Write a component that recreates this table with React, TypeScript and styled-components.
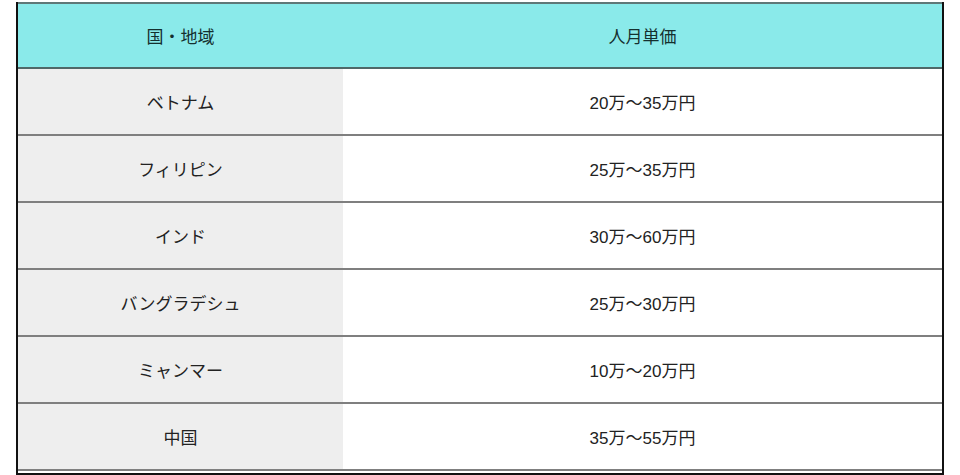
import styled, { createGlobalStyle } from 'styled-components';

const GlobalStyle = createGlobalStyle`
  html, body {
    margin: 0;
    padding: 0;
    background: #ffffff;
  }
  body {
    font-family: 'Liberation Sans', 'Noto Sans CJK JP', sans-serif;
    color: #222222;
  }
`;

interface PriceRow {
  region: string;
  price: string;
}

const rows: PriceRow[] = [
  { region: 'ベトナム', price: '20万～35万円' },
  { region: 'フィリピン', price: '25万～35万円' },
  { region: 'インド', price: '30万～60万円' },
  { region: 'バングラデシュ', price: '25万～30万円' },
  { region: 'ミャンマー', price: '10万～20万円' },
  { region: '中国', price: '35万～55万円' },
];

const App = () => {
  return (
    <>
      <GlobalStyle />
      <Page>
        <Table>
          <HeaderRow>
            <HeaderCell>国・地域</HeaderCell>
            <HeaderCell>人月単価</HeaderCell>
          </HeaderRow>
          {rows.map((row) => (
            <Row key={row.region}>
              <Cell $shaded>{row.region}</Cell>
              <Cell>{row.price}</Cell>
            </Row>
          ))}
        </Table>
      </Page>
    </>
  );
};

const Page = styled.div`
  padding: 2px 0 0 16px;
`;

const Table = styled.div`
  width: 928px;
  box-sizing: border-box;
  border-left: 2px solid #111111;
  border-right: 2px solid #111111;
  border-bottom: 2px solid #111111;
  padding-bottom: 2px;
  background: #ffffff;
`;

const Row = styled.div`
  display: grid;
  grid-template-columns: 325px 1fr;
  height: 67px;
  box-sizing: border-box;
  border-bottom: 2px solid #7f7f7f;
`;

const HeaderRow = styled(Row)`
  height: 67px;
  border-top: 2px solid #5f7878;
  border-bottom-color: #4f6868;
  background: #8aeaea;
`;

const Cell = styled.div<{ $shaded?: boolean }>`
  display: flex;
  align-items: center;
  justify-content: center;
  font-size: 17px;
  background: ${(p) => (p.$shaded ? '#eeeeee' : 'transparent')};
`;

const HeaderCell = styled(Cell)`
  color: #15302f;
`;

export default App;
